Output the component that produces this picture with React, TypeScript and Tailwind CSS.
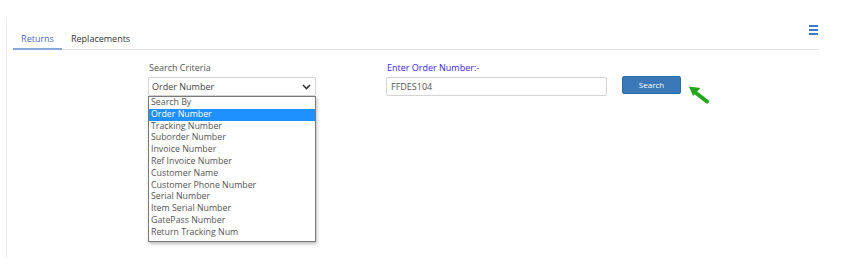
import { useState } from 'react';

const options = [
  'Search By',
  'Order Number',
  'Tracking Number',
  'Suborder Number',
  'Invoice Number',
  'Ref Invoice Number',
  'Customer Name',
  'Customer Phone Number',
  'Serial Number',
  'Item Serial Number',
  'GatePass Number',
  'Return Tracking Num',
];

function ChevronDown() {
  return (
    <svg width="9" height="6" viewBox="0 0 9 6" className="text-[#333]">
      <path d="M1 1l3.5 3.5L8 1" fill="none" stroke="currentColor" strokeWidth="1.6" />
    </svg>
  );
}

function GreenArrow() {
  return (
    <svg width="22" height="20" viewBox="0 0 22 20">
      <path d="M20 17.5L9 9" stroke="#22a81c" strokeWidth="4" strokeLinecap="round" />
      <path d="M2 2.5l11.5 1.5-7.5 8z" fill="#22a81c" />
    </svg>
  );
}

export default function App() {
  const [tab, setTab] = useState<'returns' | 'replacements'>('returns');
  const [selected] = useState('Order Number');

  return (
    <div
      className="w-[843px] h-[276px] bg-white text-[9px] text-[#444] pt-[17px] overflow-hidden"
      style={{ fontFamily: '"Open Sans", "Noto Sans", sans-serif' }}
    >
      <div className="ml-[6px] h-[240px] w-[813px] border-l border-[#ececec] pl-[6px]">
        <div className="flex items-end justify-between border-b border-[#e6e6e6] h-[33px]">
          <div className="flex">
            <button
              onClick={() => setTab('returns')}
              className={`w-[49px] h-[33px] pt-[13px] text-[9px] leading-[12px] border-b-2 -mb-px ${
                tab === 'returns' ? 'text-[#4a6bbd] border-[#86a9dd]' : 'text-[#333] border-transparent'
              }`}
            >
              Returns
            </button>
            <button
              onClick={() => setTab('replacements')}
              className={`ml-[4px] px-[5px] h-[33px] pt-[13px] text-[9px] leading-[12px] border-b-2 -mb-px ${
                tab === 'replacements' ? 'text-[#4a6bbd] border-[#86a9dd]' : 'text-[#333] border-transparent'
              }`}
            >
              Replacements
            </button>
          </div>
          <div className="self-start mt-[8px] flex flex-col gap-[2px] w-[9px] mr-px">
            <span className="h-[2px] bg-[#3a7bc8]" />
            <span className="h-[2px] bg-[#3a7bc8]" />
            <span className="h-[2px] bg-[#3a7bc8]" />
          </div>
        </div>

        <div className="flex pt-[12px]">
          <div className="ml-[135px] w-[168px] relative">
            <div className="text-[#555] leading-[12px] pl-px">Search Criteria</div>
            <div className="mt-[3px] h-[19px] border border-[#d4d4d4] rounded-[2px] flex items-center justify-between pl-[3px] pr-[4px] text-[#444]">
              <span>{selected}</span>
              <ChevronDown />
            </div>
            <ul className="absolute left-0 top-[34px] w-[168px] border border-[#7a7a7a] bg-white shadow-[1px_2px_3px_rgba(0,0,0,0.25)] leading-[11.8px] text-[8.8px] pb-[2px]">
              {options.map((o) => (
                <li
                  key={o}
                  className={`pl-[2px] ${o === selected ? 'bg-[#1e90ff] text-white' : 'text-[#555]'}`}
                >
                  {o}
                </li>
              ))}
            </ul>
          </div>

          <div className="ml-[70px] w-[221px]">
            <div className="text-[#3d1cf0] leading-[12px] pl-px">Enter Order Number:-</div>
            <input
              defaultValue="FFDES104"
              className="mt-[3px] w-[221px] h-[19px] border border-[#d4d4d4] rounded-[2px] px-[4px] text-[9px] text-[#555] outline-none"
            />
          </div>

          <div className="ml-[15px] pt-[14px] flex items-start">
            <button className="w-[59px] h-[18px] bg-[#3a78b8] rounded-[2px] text-white text-[8px] leading-[16px] border border-[#2f6aa6]">
              Search
            </button>
            <div className="mt-[8px] ml-[6px]">
              <GreenArrow />
            </div>
          </div>
        </div>
      </div>
    </div>
  );
}
